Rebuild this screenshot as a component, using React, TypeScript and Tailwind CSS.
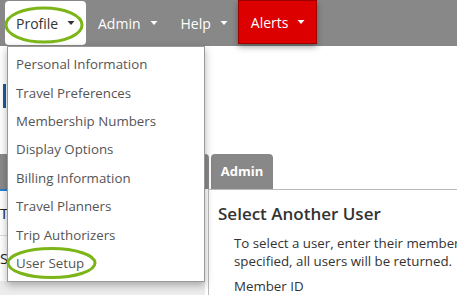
import React from "react";

const Caret = ({ color }: { color: string }) => (
  <svg width="8" height="5" viewBox="0 0 8 5" className="ml-[9px]">
    <path d="M0.5 0 L7.5 0 L4 4 Z" fill={color} />
  </svg>
);

const items = [
  "Personal Information",
  "Travel Preferences",
  "Membership Numbers",
  "Display Options",
  "Billing Information",
  "Travel Planners",
  "Trip Authorizers",
  "User Setup",
];

export default function App() {
  return (
    <div
      className="relative w-[457px] h-[295px] overflow-hidden bg-white"
      style={{ fontFamily: '"Open Sans", "Liberation Sans", sans-serif' }}
    >
      {/* Nav bar */}
      <div className="h-[46px] bg-[#888888] flex items-start pl-[5px]">
        <div className="mt-[1px] h-[44px] w-[81px] bg-white rounded-[4px] flex items-center pl-[11px] text-[14px] text-[#333]">
          <span>Profile</span>
          <Caret color="#333" />
        </div>
        <div className="h-[46px] flex items-center ml-[12px] text-[14px] text-white">
          <span>Admin</span>
          <Caret color="#fff" />
        </div>
        <div className="h-[46px] flex items-center ml-[23px] text-[14px] text-white">
          <span>Help</span>
          <Caret color="#fff" />
        </div>
        <div className="ml-[10px] h-[44px] w-[79px] bg-[#dd0000] border border-[#9e0000] shadow-[0_3px_6px_rgba(0,0,0,0.35)] flex items-center pl-[12px] text-[14px] text-white">
          <span>Alerts</span>
          <Caret color="#fff" />
        </div>
      </div>

      {/* Page content below */}
      <div className="flex flex-col h-[249px]">
        <div className="h-[109px]">
          <div className="mt-[38px] ml-[3px] w-[3px] h-[24px] bg-[#1a5c9e]" />
          <div className="mt-[22px] -ml-[30px] text-[12px] text-[#1a5c9e] leading-[14px]">Back</div>
        </div>
        <div className="h-[35px] flex">
          <div className="w-[209px] h-full bg-[#8a8a8a] rounded-tr-[4px]" />
          <div className="ml-[2px] w-[62px] h-full bg-[#888888] rounded-t-[4px] flex items-center justify-center text-[13px] font-bold text-white">
            Admin
          </div>
        </div>
        <div className="flex-1 flex">
          <div className="w-[208px] flex flex-col">
            <div className="w-[205px] h-[92px] border-t-2 border-t-[#2a7fd4] border-r border-r-[#888] flex flex-col">
              <div className="h-[46px] border-b border-b-[#ddd] flex items-center text-[15px] text-[#222]">T</div>
              <div className="h-[46px] flex items-center text-[15px] text-[#222]">S</div>
            </div>
            <div className="flex-1 bg-[#ececec]" />
          </div>
          <div className="ml-[3px] flex-1 border-l border-t border-[#bbb] pl-[9px] pt-[12px]">
            <div className="text-[17px] font-semibold text-[#333] leading-[24px]">Select Another User</div>
            <div className="pl-[16px] mt-[8px] text-[13.3px] text-[#333] leading-[18px] whitespace-nowrap">
              <div>To select a user, enter their member</div>
              <div>specified, all users will be returned.</div>
              <div className="mt-[7px]">Member ID</div>
            </div>
          </div>
        </div>
      </div>

      {/* Dropdown menu */}
      <div className="absolute left-[7px] top-[46px] w-[198px] h-[236px] bg-white border border-[#999] shadow-[0_3px_8px_rgba(0,0,0,0.3)] pt-[4px]">
        {items.map((t) => (
          <div key={t} className="h-[28.4px] flex items-center pl-[8px] text-[13.3px] text-[#555]">
            {t}
          </div>
        ))}
      </div>

      {/* Green highlight ellipses */}
      <svg className="absolute left-0 top-0" width="457" height="295" viewBox="0 0 457 295">
        <ellipse cx="44" cy="25" rx="38" ry="17" fill="none" stroke="#7cb518" strokeWidth="3" />
        <ellipse cx="51.5" cy="263" rx="43.5" ry="14.5" fill="none" stroke="#7cb518" strokeWidth="3" />
      </svg>
    </div>
  );
}
